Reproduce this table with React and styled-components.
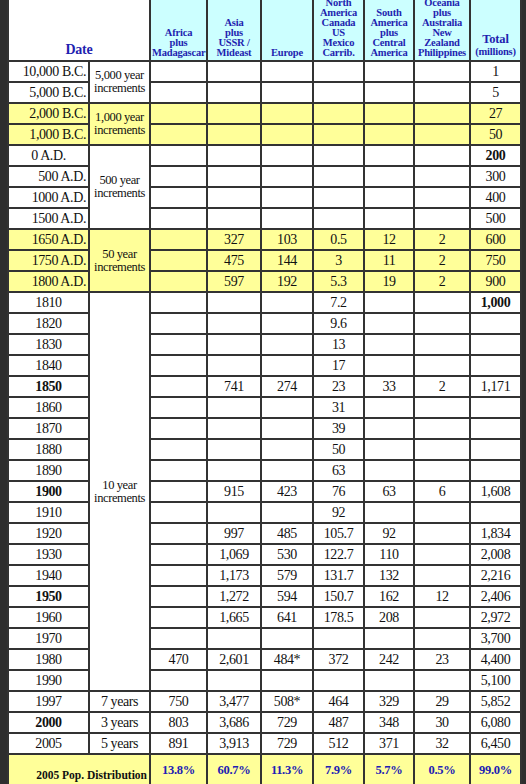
import styled, { createGlobalStyle } from 'styled-components';

const GlobalStyle = createGlobalStyle`
  html, body {
    margin: 0;
    padding: 0;
    background: #2e2e2e;
  }
  body {
    font-family: "Liberation Serif", "Times New Roman", serif;
    overflow: hidden;
  }
`;

const Wrap = styled.div`
  padding: 0 6px 0 7px;
  height: 784px;
  overflow: hidden;
`;

const Table = styled.table`
  width: 100%;
  margin-top: -5px;
  border-collapse: collapse;
  table-layout: fixed;
  background: #fff;
`;

const HeadCell = styled.th`
  border: 2px solid #333;
  background: ${(p) => (p.$plain ? '#fff' : '#ccffff')};
  color: #1f1fb0;
  font-size: 10.5px;
  line-height: 10px;
  letter-spacing: -0.2px;
  font-weight: 700;
  vertical-align: bottom;
  text-align: center;
  padding: 1px 1px 2px;
`;

const DateTitle = styled.div`
  font-size: 14px;
  line-height: 16px;
`;

const TotalTitle = styled.div`
  font-size: 12.5px;
  line-height: 13px;
`;

const Millions = styled.div`
  font-size: 10.5px;
  line-height: 12px;
`;

const Row = styled.tr`
  height: 21px;
`;

const Cell = styled.td`
  border: 2px solid #333;
  padding: 0 2px;
  font-size: 14px;
  letter-spacing: -0.4px;
  line-height: 17px;
  color: #111;
  white-space: nowrap;
  vertical-align: middle;
  text-align: ${(p) => p.$align || 'center'};
  font-weight: ${(p) => (p.$bold ? 700 : 400)};
  background: ${(p) => (p.$tone === 'y' ? '#ffff99' : '#fff')};
`;

const SpanCell = styled(Cell)`
  font-size: ${(p) => (p.$small ? '12.5px' : '14px')};
  letter-spacing: ${(p) => (p.$small ? '-0.4px' : '-0.4px')};
  line-height: ${(p) => (p.$small ? '13px' : '17px')};
  white-space: normal;
`;

const FootRow = styled.tr`
  height: 40px;
`;

const FootLabel = styled.td`
  border: 2px solid #333;
  background: #ffff99;
  font-size: 11.5px;
  font-weight: 700;
  color: #111;
  text-align: right;
  vertical-align: top;
  padding: 14px 2px 0 0;
  white-space: nowrap;
`;

const FootPct = styled.td`
  border: 2px solid #333;
  background: #ffff99;
  color: #2020b4;
  font-size: 12.5px;
  line-height: 14px;
  font-weight: 700;
  letter-spacing: -0.3px;
  text-align: center;
  vertical-align: top;
  padding: 8px 0 0;
`;

const widths = [81, 61, 57, 54, 52, 51, 50, 56, 51];

const heads = [
  ['Africa', 'plus', 'Madagascar'],
  ['Asia', 'plus', 'USSR /', 'Mideast'],
  ['Europe'],
  ['North', 'America', 'Canada', 'US', 'Mexico', 'Carrib.'],
  ['South', 'America', 'plus', 'Central', 'America'],
  ['Oceania', 'plus', 'Australia', 'New', 'Zealand', 'Philippines'],
];

const E = ['', '', '', '', '', ''];

const rows = [
  { d: '10,000 B.C.', a: 'right', inc: ['5,000 year', 'increments'], span: 2, v: E, t: '1', tone: 'w' },
  { d: '5,000 B.C.', a: 'right', v: E, t: '5', tone: 'w' },
  { d: '2,000 B.C.', a: 'right', inc: ['1,000 year', 'increments'], span: 2, v: E, t: '27', tone: 'y' },
  { d: '1,000 B.C.', a: 'right', v: E, t: '50', tone: 'y' },
  { d: '0 A.D.', a: 'center', inc: ['500 year', 'increments'], span: 4, v: E, t: '200', tb: true, tone: 'w' },
  { d: '500 A.D.', a: 'right', v: E, t: '300', tone: 'w' },
  { d: '1000 A.D.', a: 'right', v: E, t: '400', tone: 'w' },
  { d: '1500 A.D.', a: 'right', v: E, t: '500', tone: 'w' },
  { d: '1650 A.D.', a: 'right', inc: ['50 year', 'increments'], span: 3, v: ['', '327', '103', '0.5', '12', '2'], t: '600', tone: 'y' },
  { d: '1750 A.D.', a: 'right', v: ['', '475', '144', '3', '11', '2'], t: '750', tone: 'y' },
  { d: '1800 A.D.', a: 'right', v: ['', '597', '192', '5.3', '19', '2'], t: '900', tone: 'y' },
  { d: '1810', inc: ['10 year', 'increments'], span: 19, v: ['', '', '', '7.2', '', ''], t: '1,000', tb: true },
  { d: '1820', v: ['', '', '', '9.6', '', ''], t: '' },
  { d: '1830', v: ['', '', '', '13', '', ''], t: '' },
  { d: '1840', v: ['', '', '', '17', '', ''], t: '' },
  { d: '1850', db: true, v: ['', '741', '274', '23', '33', '2'], t: '1,171' },
  { d: '1860', v: ['', '', '', '31', '', ''], t: '' },
  { d: '1870', v: ['', '', '', '39', '', ''], t: '' },
  { d: '1880', v: ['', '', '', '50', '', ''], t: '' },
  { d: '1890', v: ['', '', '', '63', '', ''], t: '' },
  { d: '1900', db: true, v: ['', '915', '423', '76', '63', '6'], t: '1,608' },
  { d: '1910', v: ['', '', '', '92', '', ''], t: '' },
  { d: '1920', v: ['', '997', '485', '105.7', '92', ''], t: '1,834' },
  { d: '1930', v: ['', '1,069', '530', '122.7', '110', ''], t: '2,008' },
  { d: '1940', v: ['', '1,173', '579', '131.7', '132', ''], t: '2,216' },
  { d: '1950', db: true, v: ['', '1,272', '594', '150.7', '162', '12'], t: '2,406' },
  { d: '1960', v: ['', '1,665', '641', '178.5', '208', ''], t: '2,972' },
  { d: '1970', v: E, t: '3,700' },
  { d: '1980', v: ['470', '2,601', '484*', '372', '242', '23'], t: '4,400' },
  { d: '1990', v: E, t: '5,100' },
  { d: '1997', one: '7 years', v: ['750', '3,477', '508*', '464', '329', '29'], t: '5,852' },
  { d: '2000', db: true, one: '3 years', v: ['803', '3,686', '729', '487', '348', '30'], t: '6,080' },
  { d: '2005', one: '5 years', v: ['891', '3,913', '729', '512', '371', '32'], t: '6,450' },
];

const shares = ['13.8%', '60.7%', '11.3%', '7.9%', '5.7%', '0.5%', '99.0%'];

const App = () => {
  return (
    <Wrap>
      <GlobalStyle />
      <Table>
        <colgroup>
          {widths.map((w, i) => (
            <col key={i} style={{ width: w }} />
          ))}
        </colgroup>
        <thead>
          <tr>
            <HeadCell colSpan={2} $plain>
              <DateTitle>Date</DateTitle>
            </HeadCell>
            {heads.map((lines, i) => (
              <HeadCell key={i}>
                {lines.map((l, j) => (
                  <div key={j}>{l}</div>
                ))}
              </HeadCell>
            ))}
            <HeadCell>
              <TotalTitle>Total</TotalTitle>
              <Millions>(millions)</Millions>
            </HeadCell>
          </tr>
        </thead>
        <tbody>
          {rows.map((r) => {
            const tone = r.tone || 'w';
            return (
              <Row key={r.d}>
                <Cell $tone={tone} $align={r.a} $bold={r.db}>
                  {r.d}
                </Cell>
                {r.inc && (
                  <SpanCell rowSpan={r.span} $tone={tone} $small>
                    {r.inc[0]}
                    <br />
                    {r.inc[1]}
                  </SpanCell>
                )}
                {r.one && <SpanCell $tone={tone}>{r.one}</SpanCell>}
                {r.v.map((v, i) => (
                  <Cell key={i} $tone={tone}>
                    {v}
                  </Cell>
                ))}
                <Cell $tone={tone} $bold={r.tb}>
                  {r.t}
                </Cell>
              </Row>
            );
          })}
          <FootRow>
            <FootLabel colSpan={2}>2005 Pop. Distribution</FootLabel>
            {shares.map((s) => (
              <FootPct key={s}>{s}</FootPct>
            ))}
          </FootRow>
        </tbody>
      </Table>
    </Wrap>
  );
};

export default App;
